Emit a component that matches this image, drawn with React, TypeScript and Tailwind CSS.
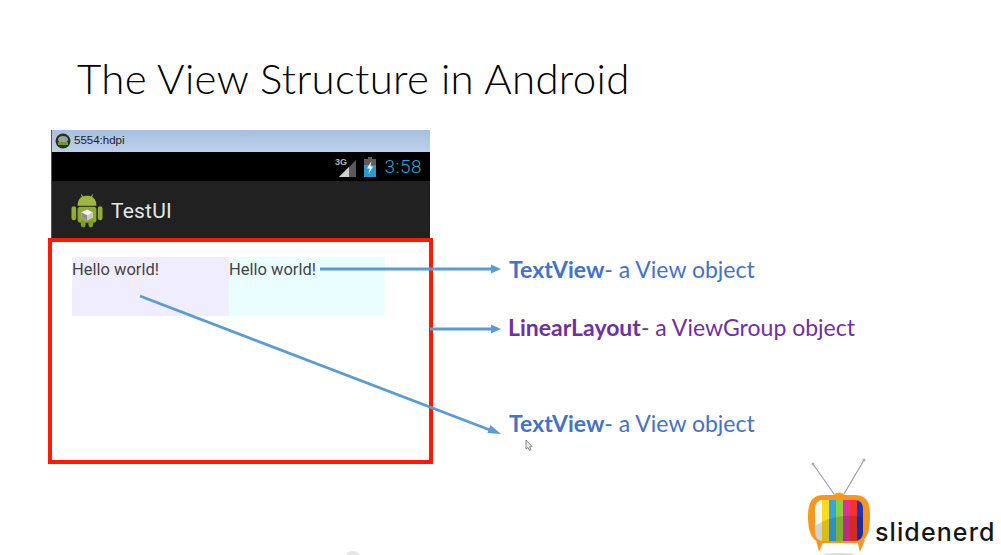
export default function App() {
  const lato = "font-['Lato','Noto_Sans',sans-serif]";
  return (
    <div className="relative w-[1001px] h-[555px] bg-white overflow-hidden font-['Lato',sans-serif]">
      <h1 className="pl-[77px] pt-[52px] h-[130px] text-[42px] leading-[52px] font-light text-black tracking-[0.3px]">
        The View Structure in Android
      </h1>
      <div className="flex">
        <div className="ml-[48px] w-[385px]">
          <div className="mx-[3px] w-[379px] h-[108px] flex flex-col border-l border-[#555]">
            <div className="h-[22px] bg-gradient-to-b from-[#a6c0e2] to-[#bdd1ea] flex items-center pl-[3px] gap-[3px]">
              <svg width="16" height="16" viewBox="0 0 16 16">
                <circle cx="8" cy="8" r="7.5" fill="#27351c" />
                <ellipse cx="8" cy="6.5" rx="5" ry="3.5" fill="#9aa39a" />
                <rect x="3" y="9" width="10" height="3" fill="#6f9a2b" />
              </svg>
              <span className="text-[11.5px] leading-none text-[#1c1c1c] font-['Liberation_Sans',sans-serif]">5554:hdpi</span>
            </div>
            <div className="h-[29px] bg-black flex items-center justify-end pr-[8px]">
              <svg width="21" height="20" viewBox="0 0 21 20" className="mr-[8px]">
                <text x="0" y="8" fontSize="9" fontWeight="700" fill="#b5b5b5" fontFamily="Liberation Sans">3G</text>
                <path d="M4 20 L21 3 V20 Z" fill="#5a5a5a" />
                <path d="M4 20 L14 10 V20 Z" fill="#d0d0d0" />
              </svg>
              <svg width="12" height="20" viewBox="0 0 12 20" className="mr-[8px]">
                <rect x="4" y="0" width="4" height="2" fill="#5d5d5d" />
                <rect x="0" y="2" width="12" height="6" fill="#5d5d5d" />
                <rect x="0" y="8" width="12" height="12" fill="#2f97c9" />
                <path d="M7.5 4 L3 11.5 H5.8 L4.5 17 L9 9.5 H6.3 Z" fill="#ffffff" />
              </svg>
              <span className="text-[19px] leading-none font-light text-[#33a5d8] font-['Roboto',sans-serif] tracking-[0.5px]">3:58</span>
            </div>
            <div className="h-[57px] bg-[#212121] flex items-center pl-[19px] gap-[8px]">
              <svg width="32" height="37" viewBox="0 0 34 38">
                <path d="M11 3 L13 7 M23 3 L21 7" stroke="#9db83a" strokeWidth="1.2" />
                <path d="M7 15 C7 7 12 4.5 17 4.5 C22 4.5 27 7 27 15 Z" fill="#9db83a" />
                <rect x="7" y="16" width="20" height="17" rx="3" fill="#8daa30" />
                <rect x="0.5" y="15.5" width="5" height="15" rx="2.5" fill="#92ad34" />
                <rect x="28.5" y="15.5" width="5" height="15" rx="2.5" fill="#92ad34" />
                <rect x="10.5" y="31" width="5" height="7" rx="2.5" fill="#7f9b2c" />
                <rect x="18.5" y="31" width="5" height="7" rx="2.5" fill="#7f9b2c" />
                <path d="M17 19 L23 22 V27.5 L17 30.5 L11 27.5 V22 Z" fill="#f4f4f4" />
                <path d="M17 25 L23 22 V27.5 L17 30.5 Z" fill="#c9c9c9" />
                <path d="M17 25 L11 22 V27.5 L17 30.5 Z" fill="#8c8c8c" />
              </svg>
              <span className="text-[21px] leading-none text-[#e6e6e6] font-['Roboto',sans-serif] mt-[3px] tracking-[0.2px]">TestUI</span>
            </div>
          </div>
          <div className="w-[385px] h-[226px] border-[4px] border-[#fe1a00] pl-[20px] pt-[15px]">
            <div className="flex h-[59px] w-[313px] text-[16.5px] leading-[25px] text-[#444] font-['Roboto',sans-serif]">
              <div className="w-[157px] bg-[#f0eefe]">Hello world!</div>
              <div className="w-[156px] bg-[#eafeff]">Hello world!</div>
            </div>
          </div>
        </div>
        <div className={`ml-[76px] flex flex-col text-[23px] leading-[28px] text-[#4472c4] ${lato}`}>
          <p className="mt-[125px]"><b className="font-bold">TextView</b>- a View object</p>
          <p className="mt-[30px] -ml-[1px] text-[#7030a0]"><b className="font-bold">LinearLayout</b>- a ViewGroup object</p>
          <p className="mt-[68px]"><b className="font-bold">TextView</b>- a View object</p>
        </div>
      </div>

      {/* Annotation arrows, drawn over the slide */}
      <svg className="absolute inset-0 pointer-events-none" width="1001" height="555" viewBox="0 0 1001 555">
        <g stroke="#5b9bd5" strokeWidth="2.8" fill="none">
          <path d="M320 269 H492" />
          <path d="M430 329 H492" />
          <path d="M140 296 L490 430" />
        </g>
        <g fill="#5b9bd5">
          <path d="M501 269 L491 264.5 V273.5 Z" />
          <path d="M501 329 L491 324.5 V333.5 Z" />
          <path d="M501 434 L490.5 425 L487.5 433 Z" />
        </g>
        {/* mouse cursor */}
        <path d="M526 440 V449 L528 447.5 L529.5 450.5 L531 449.8 L529.6 446.8 L532 446.5 Z" fill="#f2f2f2" stroke="#666" strokeWidth="0.8" />
        {/* faint shape at bottom */}
        <path d="M346 555 C348 551.5 351 551 353 551 C356 551 358 552 360 555 Z" fill="#e6e6e6" />
      </svg>

      {/* slidenerd logo */}
      <div className="absolute left-[806px] top-[458px] w-[195px] h-[97px]">
        <svg className="absolute left-0 top-0" width="70" height="97" viewBox="806 458 70 97">
          <defs>
            <clipPath id="scr">
              <rect x="815" y="500" width="48" height="41" rx="8" />
            </clipPath>
          </defs>
          <ellipse cx="839" cy="555" rx="16" ry="2" fill="#dcdcdc" />
          <path d="M813 464 L834 494 M864 460 L844 494" stroke="#9a9a9a" strokeWidth="1.1" />
          <circle cx="813" cy="464" r="1.5" fill="#aaa" />
          <circle cx="864" cy="460" r="1.5" fill="#aaa" />
          <path d="M831 497 Q839 488 847 497 Z" fill="#f7a024" />
          <path d="M816 540 L819 552 L824 540 Z M857 540 L860 552 L865 540 Z" fill="#f39a1e" />
          <path d="M824 495 H854 C866 495 870 501 870 516 C870 534 866 543 854 543 H824 C813 543 808 534 808 516 C808 501 813 495 824 495 Z" fill="#f9961f" />
          <g clipPath="url(#scr)">
            <rect x="815" y="500" width="7" height="41" fill="#f5f5f5" />
            <rect x="822" y="500" width="7" height="41" fill="#fbdc1e" />
            <rect x="829" y="500" width="7" height="41" fill="#2fa8e2" />
            <rect x="836" y="500" width="7" height="41" fill="#8ed13a" />
            <rect x="843" y="500" width="7" height="41" fill="#e0309a" />
            <rect x="850" y="500" width="7" height="41" fill="#f5332b" />
            <rect x="857" y="500" width="6" height="41" fill="#2236b5" />
            <path d="M815 541 V526 C830 516 848 514 863 517 V541 Z" fill="#000" fillOpacity="0.14" />
          </g>
        </svg>
        <span className="absolute left-[69px] top-[59px] text-[25px] leading-[30px] font-medium text-[#161616] tracking-[1.1px] font-['Inter',sans-serif]">slidenerd</span>
      </div>
    </div>
  );
}
